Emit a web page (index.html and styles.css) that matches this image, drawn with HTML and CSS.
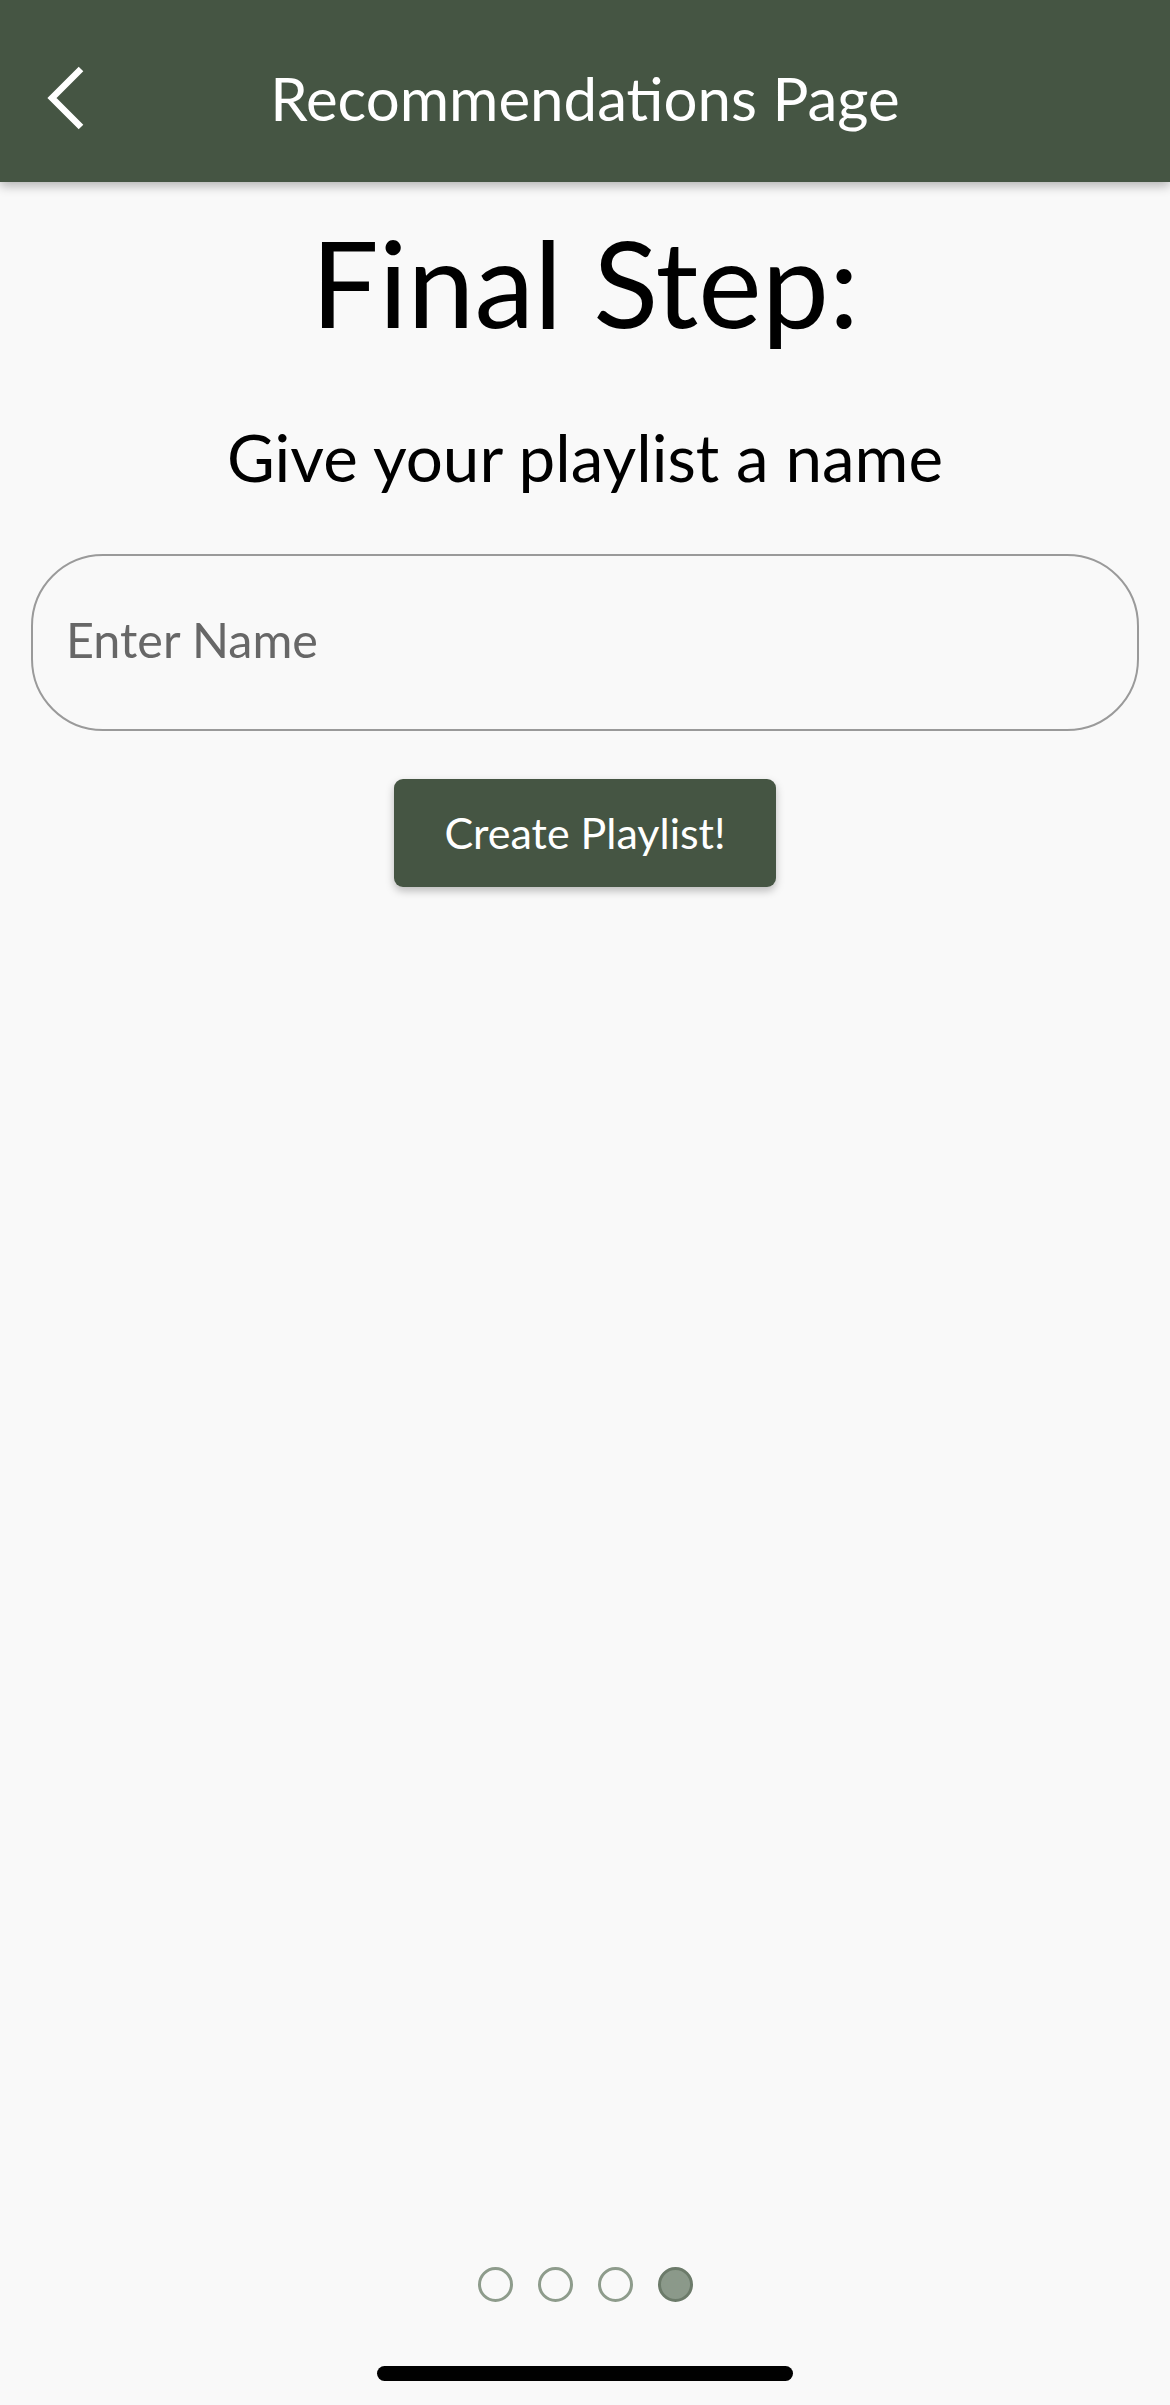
FILE: index.html
```html
<!DOCTYPE html>
<html lang="en">
<head>
<meta charset="utf-8">
<title>Recommendations Page</title>
<link rel="stylesheet" href="styles.css">
</head>
<body>
<div class="app">
  <header class="topbar">
    <div class="topbar-left">
      <svg class="back-icon" width="44" height="66" viewBox="0 0 44 66" aria-hidden="true">
        <polyline points="37,4 8,33 37,62" fill="none" stroke="#ffffff" stroke-width="6.5" stroke-linejoin="miter" stroke-linecap="butt"/>
      </svg>
    </div>
    <h1 class="topbar-title">Recommendations Page</h1>
    <div class="topbar-right"></div>
  </header>

  <main class="content">
    <h2 class="step-title">Final Step:</h2>
    <p class="step-subtitle">Give your playlist a name</p>
    <input class="name-input" type="text" placeholder="Enter Name">
    <button class="create-btn" type="button">Create Playlist!</button>
  </main>

  <footer class="bottom">
    <div class="dots">
      <span class="dot"></span>
      <span class="dot"></span>
      <span class="dot"></span>
      <span class="dot dot-active"></span>
    </div>
    <div class="home-indicator"></div>
  </footer>
</div>
</body>
</html>
```

FILE: styles.css
```css
* {
  box-sizing: border-box;
}

html, body {
  margin: 0;
  padding: 0;
}

body {
  background: #f9f9f9;
  font-family: Lato, "Open Sans", "Liberation Sans", sans-serif;
  color: #000;
}

.app {
  width: 1170px;
  min-height: 2405px;
  display: flex;
  flex-direction: column;
}

.topbar {
  height: 182px;
  padding-top: 14px;
  background: #455543;
  display: grid;
  grid-template-columns: 1fr auto 1fr;
  align-items: center;
  box-shadow: 0 4px 10px rgba(0, 0, 0, 0.28);
  position: relative;
  z-index: 1;
}

.topbar-left {
  padding-left: 44px;
  display: flex;
  align-items: center;
}

.back-icon {
  display: block;
}

.topbar-title {
  margin: 0;
  color: #ffffff;
  font-size: 60px;
  font-weight: 400;
  line-height: 1.2;
  white-space: nowrap;
}

.content {
  display: flex;
  flex-direction: column;
  align-items: center;
  padding-top: 28px;
}

.step-title {
  margin: 0;
  font-size: 120px;
  font-weight: 400;
  line-height: 1.2;
}

.step-subtitle {
  margin: 64px 0 0;
  font-size: 65.5px;
  line-height: 1.2;
}

.name-input {
  margin-top: 57px;
  width: 1108px;
  height: 177px;
  border: 2.5px solid #9a9a9a;
  border-radius: 72px;
  background: #f9f9f9;
  padding: 0 0 6px 33px;
  font-family: Lato, "Open Sans", "Liberation Sans", sans-serif;
  font-size: 48.5px;
  color: #333;
  outline: none;
}

.name-input::placeholder {
  color: #676767;
  opacity: 1;
}

.create-btn {
  margin-top: 48px;
  width: 382px;
  height: 108px;
  border: none;
  border-radius: 9px;
  background: #455543;
  color: #ffffff;
  font-family: Lato, "Open Sans", "Liberation Sans", sans-serif;
  font-size: 43px;
  line-height: 1.2;
  padding: 0;
  box-shadow: 0 4px 8px rgba(0, 0, 0, 0.25);
}

.bottom {
  margin-top: auto;
  display: flex;
  flex-direction: column;
  align-items: center;
  padding-bottom: 24px;
}

.dots {
  display: flex;
  gap: 25px;
}

.dot {
  width: 35px;
  height: 35px;
  border-radius: 50%;
  border: 3.5px solid #8e9c8c;
  background: transparent;
}

.dot-active {
  background: #8b998a;
  border-color: #6c7b6a;
}

.home-indicator {
  margin-top: 64px;
  width: 416px;
  height: 15px;
  border-radius: 8px;
  background: #000;
}
```
